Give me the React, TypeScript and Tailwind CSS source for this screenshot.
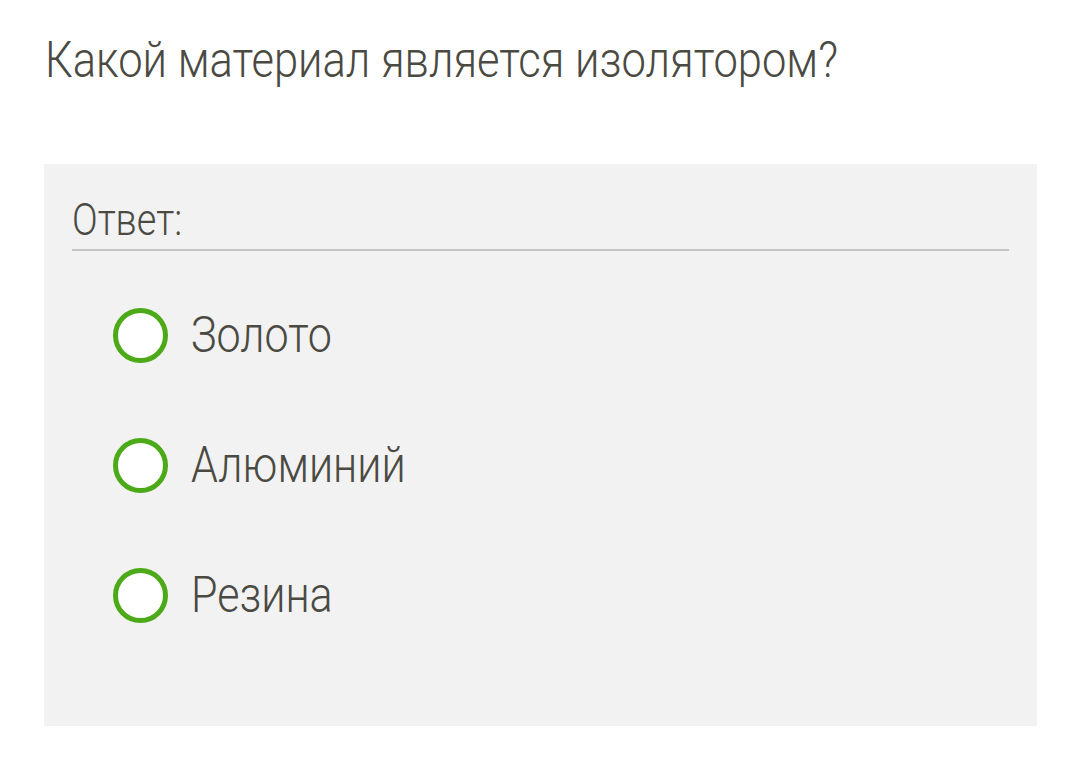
import React from "react";

const options = ["Золото", "Алюминий", "Резина"];

export default function App() {
  return (
    <div className="w-[1066px] h-[781px] bg-white text-[#4a4a42] font-['Roboto',sans-serif] font-light">
      <div className="pl-[45px] pt-[28px] h-[164px]">
        <span className="inline-block origin-left scale-x-[0.87] text-[50px] leading-[64px] whitespace-nowrap">
          Какой материал является изолятором?
        </span>
      </div>
      <div className="ml-[44px] w-[993px] h-[562px] bg-[#f2f2f2] px-[28px] pt-[30px]">
        <div className="border-b-2 border-[#c4c4c4] h-[57px]">
          <span className="inline-block origin-left scale-x-[0.86] text-[44px] leading-[52px] whitespace-nowrap">
            Ответ:
          </span>
        </div>
        <div className="flex flex-col gap-[74px] pl-[41px] pt-[56px]">
          {options.map((o) => (
            <div key={o} className="flex items-center h-[56px] gap-[23px]">
              <div className="w-[55px] h-[55px] rounded-full border-[5px] border-[#4caa18] bg-white shrink-0" />
              <span className="inline-block origin-left scale-x-[0.86] text-[50px] leading-[56px] whitespace-nowrap">
                {o}
              </span>
            </div>
          ))}
        </div>
      </div>
    </div>
  );
}
